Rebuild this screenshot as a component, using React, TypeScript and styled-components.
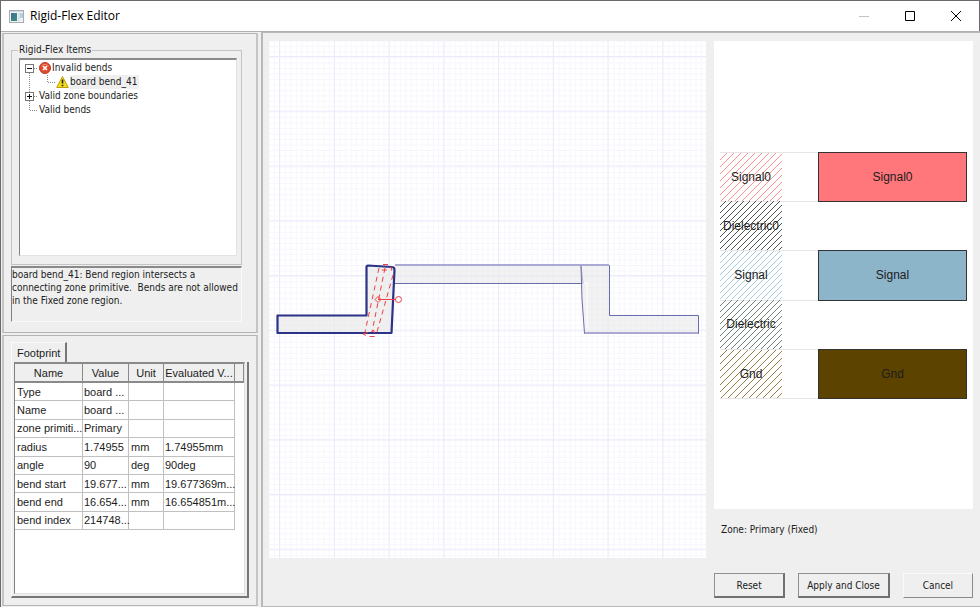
import React from 'react';
import styled, { createGlobalStyle, css } from 'styled-components';

const ui = '"DejaVu Sans Condensed", "DejaVu Sans", sans-serif';
const arial = '"Liberation Sans", Arial, sans-serif';

const GlobalStyle = createGlobalStyle`
  *, *::before, *::after { box-sizing: border-box; }
  body { margin: 0; background: #efefef; color: #1c1c1c; font-family: ${ui}; font-size: 10px; }
  button { font: inherit; color: inherit; }
`;

const Window = styled.div`
  display: flex;
  flex-direction: column;
  min-height: 100vh;
  background: #efefef;
  border-top: 1px solid #6b696b;
  border-left: 1px solid #6b696b;
`;

const TitleBar = styled.header`
  display: flex;
  align-items: center;
  height: 30px;
  padding-left: 8px;
  background: #fff;
  border-right: 1px solid #6b696b;
`;

const Title = styled.h1`
  flex: 1;
  margin: 0 0 0 6px;
  font: 400 12px/16px "Open Sans", sans-serif;
  color: #000;
`;

const CaptionButton = styled.button`
  display: flex;
  align-items: center;
  justify-content: center;
  width: 46px;
  height: 28px;
  padding: 0;
  border: 0;
  background: none;
`;

const Body = styled.main`
  flex: 1;
  display: flex;
  gap: 2px;
  border-top: 1px solid #b0b0b0;
`;

const Sidebar = styled.div`
  display: flex;
  flex-direction: column;
  gap: 2px;
  width: 258px;
  flex: none;
  padding: 1px;
`;

const Frame = styled.section<{ $grow?: boolean }>`
  display: flex;
  flex-direction: column;
  flex: ${p => (p.$grow ? '1' : 'none')};
  padding: ${p => (p.$grow ? '6px 7px 7px' : '9px 7px 10px')};
  border: solid #c4c4c4;
  border-width: 1px 2px;
  border-top-color: #b4b4b4;
  border-bottom-color: #b4b4b4;
`;

const Group = styled.fieldset`
  margin: 0 7px 1px 0;
  padding: 1px 4px 8px 7px;
  border: 1px solid #c4c4c4;
`;

const Legend = styled.legend`
  padding: 0 1px;
  margin-left: -1px;
  line-height: 14px;
`;

const sunken = css`
  border: 1px solid #e2e2e2;
  border-top: 2px solid #8a8a8a;
  border-left: 1px solid #808080;
`;

const Tree = styled.ul`
  ${sunken}
  height: 198px;
  margin: 0;
  padding: 1px 5px;
  list-style: none;
  background: #fff;
`;

const TreeRow = styled.li`
  display: flex;
  align-items: center;
  height: 14px;
  line-height: 14px;
`;

const ItemText = styled.span<{ $selected?: boolean }>`
  padding-right: 2px;
  background: ${p => (p.$selected ? '#efefef' : 'transparent')};
`;

const Message = styled.p`
  ${sunken}
  border-right-color: #fafafa;
  border-bottom-color: #fafafa;
  height: 56px;
  margin: 0 7px 0 0;
  line-height: 13px;
  white-space: pre;
`;

const Tab = styled.button`
  align-self: flex-start;
  height: 20px;
  padding: 0 5px;
  border: 1px solid #fafafa;
  border-right: 2px solid #777;
  border-bottom: 0;
  background: #efefef;
  font: 11px/16px ${arial};
`;

const TabPanel = styled.div`
  flex: 1;
  display: flex;
  padding: 0 2px 2px;
  border: 1px solid #fafafa;
  border-top: 0;
  border-right: 2px solid #777;
  border-bottom: 2px solid #777;
`;

const TableView = styled.div`
  ${sunken}
  flex: 1;
  background: #fff;
`;

const Table = styled.table`
  width: 100%;
  height: 166px;
  table-layout: fixed;
  border-collapse: separate;
  border-spacing: 0;
  font: 11px/14px ${arial};
`;

const Col = styled.col<{ $w: number }>`
  width: ${p => p.$w}px;
`;

const HeadCell = styled.th`
  height: 19px;
  padding: 0;
  background: #efefef;
  border-right: 1px solid #8a8a8a;
  border-bottom: 2px solid #8a8a8a;
  font-weight: 400;
  white-space: nowrap;
`;

const Cell = styled.td`
  padding: 0 0 0 1px;
  border-right: 1px solid #c0c0c0;
  border-bottom: 1px solid #c0c0c0;
  white-space: nowrap;

  &:nth-child(odd) {
    padding-left: 2px;
  }

  &:last-child {
    border: 0;
  }
`;

const Workspace = styled.section`
  flex: 1;
  display: flex;
  gap: 8px;
  padding: 8px 7px 8px 6px;
  border: 2px solid #b8b8b8;
  border-width: 1px 0 1px 2px;
`;

const Canvas = styled.svg`
  display: block;
  flex: 1;
  min-width: 0;
  height: 517px;
  background: #fff;
`;

const Inspector = styled.aside`
  display: flex;
  flex-direction: column;
  width: 259px;
  flex: none;
`;

const Stackup = styled.div`
  height: 468px;
  padding: 111px 6px 0;
  background: #fff;
`;

const Layers = styled.div`
  display: grid;
  grid-template-rows: repeat(5, 1fr);
  height: 246px;
  font: 12px/14px ${arial};
`;

const Layer = styled.div<{ $line: boolean }>`
  display: grid;
  grid-template-columns: 62px 1fr 149px;
  margin-bottom: ${p => (p.$line ? '-1px' : '0')};
  border: solid #e6e6e6;
  border-width: ${p => (p.$line ? '1px 0' : '0')};
`;

const Hatch = styled.div`
  position: relative;
  display: flex;
  align-items: center;
  justify-content: center;
`;

const HatchFill = styled.svg`
  position: absolute;
  inset: 0;
  width: 100%;
  height: 100%;
`;

const HatchLabel = styled.span`
  position: relative;
`;

const Block = styled.div<{ $fill: string }>`
  grid-column: 3;
  display: flex;
  align-items: center;
  justify-content: center;
  margin: -1px 0;
  border: 1px solid #333;
  background: ${p => p.$fill};
`;

const Zone = styled.p`
  margin: 13px 7px 0;
  line-height: 16px;
`;

const Actions = styled.div`
  display: flex;
  gap: 13px;
  margin-top: auto;
`;

const Push = styled.button<{ $wide?: boolean; $flat?: boolean }>`
  flex: ${p => (p.$wide ? '92' : '71')} 1 0;
  height: 25px;
  padding: 0;
  background: #efefef;
  white-space: nowrap;
  border: solid;
  border-width: ${p => (p.$flat ? '1px' : '1px 2px 2px 1px')};
  border-color: ${p => (p.$flat ? '#fafafa #8a8a8a #8a8a8a #fafafa' : '#909090 #707070 #707070 #909090')};
`;

const AppIcon = () => (
  <svg width="15" height="13" aria-hidden="true">
    <rect x=".5" y=".5" width="14" height="12" fill="#eef3f6" stroke="#a5adb3" />
    <rect x="1" y="1" width="13" height="1" fill="#cfd8dd" />
    <rect x="2" y="3" width="6" height="8" fill="#3c8580" />
    <rect x="2" y="3" width="3" height="5" fill="#47719a" />
    <rect x="9" y="3" width="2" height="8" fill="#dce3e7" />
    <rect x="11" y="3" width="3" height="5" fill="#b9cedd" />
  </svg>
);

const Branch = ({ kind }: { kind: 'minus' | 'plus' | 'end' }) => (
  <svg width="14" height="14" aria-hidden="true">
    <g stroke="#888" strokeDasharray="1 1">
      <path d={kind === 'minus' ? 'M4.5 8V14' : kind === 'plus' ? 'M4.5 0V14' : 'M4.5 0V7.5'} />
      <path d="M5 7.5H13" />
    </g>
    {kind !== 'end' && (
      <g stroke="#777" fill="#fff">
        <rect x=".5" y="3.5" width="8" height="8" />
        <path stroke="#111" d={kind === 'plus' ? 'M2 7.5H7M4.5 5V10' : 'M2 7.5H7'} />
      </g>
    )}
  </svg>
);

const ChildBranch = () => (
  <svg width="31" height="14" aria-hidden="true">
    <path stroke="#888" strokeDasharray="1 1" fill="none" d="M4.5 0V14M22.5 0V7.5H31" />
  </svg>
);

const ErrorIcon = () => (
  <svg width="13" height="14" aria-hidden="true">
    <circle cx="6" cy="7" r="5.5" fill="#de4a2b" stroke="#bd3c24" />
    <path d="M2.5 5a4 3 0 0 1 7 0" fill="none" stroke="#f08b70" />
    <path d="M4 5l4 4M8 5l-4 4" stroke="#fff" strokeWidth="1.6" />
  </svg>
);

const WarningIcon = () => (
  <svg width="14" height="14" aria-hidden="true">
    <path d="M6.500 1.500L12.300 12.500H.7Z" fill="#f5dc18" stroke="#b9a20f" strokeLinejoin="round" />
    <path d="M6.500 4.500v4M6.500 9.700v1.600" stroke="#222" strokeWidth="1.6" />
  </svg>
);

const Board = () => (
  <Canvas role="img" aria-label="Board outline">
    <defs>
      <pattern id="minor" x="10.5" y="16" width="5.475" height="5.475" patternUnits="userSpaceOnUse">
        <path d="M.5 0V5.5M0 .5H5.5" stroke="#f6f6fe" />
      </pattern>
      <pattern id="major" x="10" y="15" width="54.75" height="54.75" patternUnits="userSpaceOnUse">
        <path d="M.5 0V55M0 .5H55" stroke="#ebebfc" />
      </pattern>
    </defs>
    <rect width="100%" height="100%" fill="url(#minor)" />
    <rect width="100%" height="100%" fill="url(#major)" />
    <g fill="#e9e9ea" fillOpacity=".6" stroke="#6a6dac">
      <path d="M126 224.500H312L314 242.500H125" />
      <path d="M312 224.500H340.500V274.500H429.500V292.500H315.500L313 258Z" />
    </g>
    <path d="M315 243l3-2v46" stroke="#fff" fill="none" />
    <path d="M126 224H340M316 292H429" stroke="#a9a9d4" strokeWidth="2" />
    <path d="M8.500 274.500H97.500V226Q97.500 224.500 99 224.500L123 226Q125.500 226 125.500 229L122.500 292H8.500Z" fill="#e9e9ea" fillOpacity=".7" stroke="#2c3285" strokeWidth="2.2" strokeLinejoin="round" />
    <g fill="none" stroke="#ee4040">
      <path strokeDasharray="5 4" d="M110 227L96 291M116 227L103 291M124 234L108 291M114 223.500H121L123 229H112M94 293L105 289.500L106 295.500H99Z" />
      <path d="M109 258.500H127" />
      <path d="M109 255.500L112 258.500L109 261.500L106 258.500Z" />
      <circle cx="129.500" cy="258.500" r="3" />
    </g>
  </Canvas>
);

const HatchLines = ({ id, ink, step }: { id: string; ink: string; step: number }) => (
  <HatchFill aria-hidden="true">
    <pattern id={id} width={step} height={step} patternUnits="userSpaceOnUse">
      <path d={`M-1 1L1 -1M0 ${step}L${step} 0M${step - 1} ${step + 1}L${step + 1} ${step - 1}`} stroke={ink} />
    </pattern>
    <rect width="100%" height="100%" fill={`url(#${id})`} />
  </HatchFill>
);

const rows = [
  ['Type', 'board ...', '', ''],
  ['Name', 'board ...', '', ''],
  ['zone primiti...', 'Primary', '', ''],
  ['radius', '1.74955', 'mm', '1.74955mm'],
  ['angle', '90', 'deg', '90deg'],
  ['bend start', '19.677...', 'mm', '19.677369m...'],
  ['bend end', '16.654...', 'mm', '16.654851m...'],
  ['bend index', '214748...', '', ''],
];

const layers = [
  { name: 'Signal0', ink: '#ff9090', fill: '#ff777a', step: 7 },
  { name: 'Dielectric0', ink: '#4c5351', fill: '', step: 6 },
  { name: 'Signal', ink: '#a6cbdc', fill: '#8db5ca', step: 6 },
  { name: 'Dielectric', ink: '#6f8278', fill: '', step: 6 },
  { name: 'Gnd', ink: '#957d48', fill: '#5c4300', step: 7 },
];

export default function App() {
  return (
    <Window>
      <GlobalStyle />
      <TitleBar>
        <AppIcon />
        <Title>Rigid-Flex Editor</Title>
        <CaptionButton aria-label="Minimize" disabled>
          <svg width="10" height="10"><path d="M0 5.500H10" stroke="#c4c4c4" /></svg>
        </CaptionButton>
        <CaptionButton aria-label="Maximize">
          <svg width="10" height="10"><path d="M.5.5H9.500V9.500H.5Z" fill="none" stroke="#000" /></svg>
        </CaptionButton>
        <CaptionButton aria-label="Close">
          <svg width="10" height="10"><path d="M0 0L10 10M10 0L0 10" stroke="#000" /></svg>
        </CaptionButton>
      </TitleBar>
      <Body>
        <Sidebar>
          <Frame>
            <Group>
              <Legend>Rigid-Flex Items</Legend>
              <Tree>
                <TreeRow><Branch kind="minus" /><ErrorIcon /><ItemText>Invalid bends</ItemText></TreeRow>
                <TreeRow><ChildBranch /><WarningIcon /><ItemText $selected>board bend_41</ItemText></TreeRow>
                <TreeRow><Branch kind="plus" /><ItemText>Valid zone boundaries</ItemText></TreeRow>
                <TreeRow><Branch kind="end" /><ItemText>Valid bends</ItemText></TreeRow>
              </Tree>
            </Group>
            <Message>{'board bend_41: Bend region intersects a\nconnecting zone primitive.  Bends are not allowed\nin the Fixed zone region.'}</Message>
          </Frame>
          <Frame $grow>
            <Tab>Footprint</Tab>
            <TabPanel>
              <TableView>
                <Table>
                  <colgroup><Col $w={68} /><Col $w={46} /><Col $w={35} /><Col $w={71} /><col /></colgroup>
                  <thead>
                    <tr>{['Name', 'Value', 'Unit', 'Evaluated V...', ''].map(h => <HeadCell key={h}>{h}</HeadCell>)}</tr>
                  </thead>
                  <tbody>
                    {rows.map(r => <tr key={r[0]}>{[...r, ''].map((c, i) => <Cell key={i}>{c}</Cell>)}</tr>)}
                  </tbody>
                </Table>
              </TableView>
            </TabPanel>
          </Frame>
        </Sidebar>
        <Workspace>
          <Board />
          <Inspector>
            <Stackup>
              <Layers>
                {layers.map(l => (
                  <Layer key={l.name} $line={!!l.fill}>
                    <Hatch>
                      <HatchLines id={`hatch-${l.name}`} ink={l.ink} step={l.step} />
                      <HatchLabel>{l.name}</HatchLabel>
                    </Hatch>
                    {l.fill && <Block $fill={l.fill}>{l.name}</Block>}
                  </Layer>
                ))}
              </Layers>
            </Stackup>
            <Zone>Zone: Primary (Fixed)</Zone>
            <Actions>
              <Push>Reset</Push>
              <Push $wide>Apply and Close</Push>
              <Push $flat>Cancel</Push>
            </Actions>
          </Inspector>
        </Workspace>
      </Body>
    </Window>
  );
}
